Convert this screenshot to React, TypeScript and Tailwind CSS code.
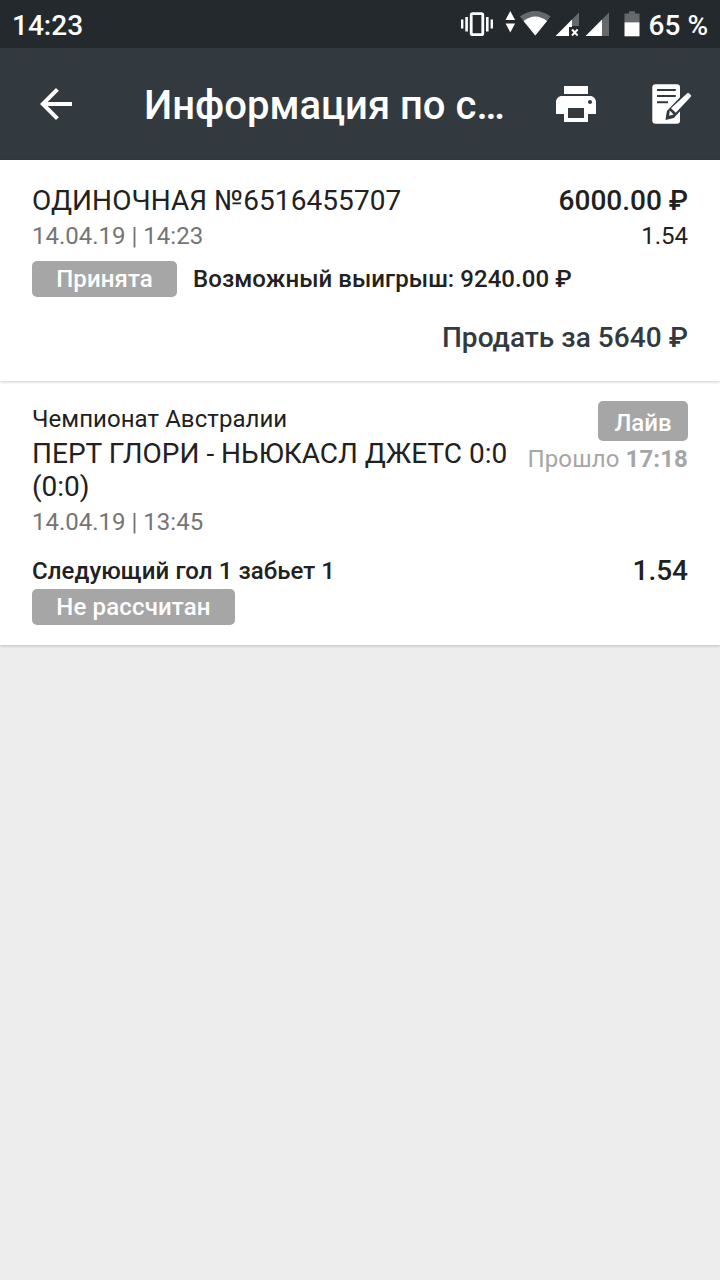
import type { ReactNode } from 'react';

function StatusIcons() {
  return (
    <svg className="h-12 w-[180px]" viewBox="460 0 180 48" fill="#fff">
      <rect x="471.2" y="13.7" width="11.6" height="21" rx="1.5" fill="none" stroke="#fff" strokeWidth="2.8" />
      <path d="M461 19.5h2.4v9H461zM465.3 17h2.6v14.5h-2.6zM486 17h2.6v14.5H486zM490.6 19.5h2.4v9h-2.4z" />
      <path d="M510.3 11l4.8 9h-9.6zM510.3 32.4l4.8-9h-9.6z" />
      <path d="M520 16.5Q535.3 5.5 550.6 16.5L535.3 35.5z" opacity=".3" />
      <path d="M523.5 21Q535.3 12 547.1 21L535.3 35.5z" />
      <path d="M579 12.6V26h-7v-6.4z" opacity=".3" />
      <path d="M555.6 36L572 19.6V27h-3v9z" />
      <path d="M572 29.5l5.6 6M577.6 29.5l-5.6 6" stroke="#fff" strokeWidth="1.9" />
      <path d="M609 12.6V36h-7V19.6z" opacity=".3" />
      <path d="M585.6 36L602 19.6V36z" />
      <path d="M629 11.2h6v2.3h4.5V22.5h-15v-9h4.5z" opacity=".3" />
      <path d="M624.5 22.3h15v14h-15z" />
    </svg>
  );
}

function BackIcon() {
  return (
    <svg className="h-12 w-12 shrink-0" viewBox="0 0 24 24" fill="#fff">
      <path d="M20 11H7.83l5.59-5.59L12 4l-8 8 8 8 1.41-1.41L7.83 13H20v-2z" />
    </svg>
  );
}

function PrintIcon() {
  return (
    <svg className="h-12 w-12 shrink-0" viewBox="0 0 24 24" fill="#fff">
      <path d="M19 8H5c-1.66 0-3 1.34-3 3v6h4v4h12v-4h4v-6c0-1.66-1.34-3-3-3zm-3 11H8v-5h8v5zm3-7c-.55 0-1-.45-1-1s.45-1 1-1 1 .45 1 1-.45 1-1 1zm-1-9H6v4h12V3z" />
    </svg>
  );
}

function NoteIcon() {
  return (
    <svg className="h-12 w-12 shrink-0" viewBox="648 80 48 48">
      <rect x="652.3" y="84.3" width="27.7" height="39.4" rx="3.2" fill="#fff" />
      <path d="M657 90h18.8M657 96h18.8M657 102.2h11" stroke="#323a40" strokeWidth="2" />
      <path d="M685.8 91.2l7 6.3-19 20.4-8.3 2 1.4-9z" fill="#323a40" />
      <path d="M687.2 93.2Q688 92.4 688.9 93.2L690.8 95Q691.6 96 690.8 96.8L675.8 112.8L671 108.2z" fill="#fff" />
      <path d="M669.7 110.5l3.9 4-4.4 1.2z" fill="#fff" />
    </svg>
  );
}

function Badge({ children, className }: { children: ReactNode; className: string }) {
  return (
    <span className={`flex items-center justify-center rounded-[5px] bg-[#a6a6a6] font-medium text-white ${className}`}>
      {children}
    </span>
  );
}

export default function App() {
  return (
    <div className="flex h-[1280px] w-[720px] flex-col overflow-hidden whitespace-nowrap bg-[#ededed] font-['Roboto','Noto_Sans',sans-serif] text-2xl text-[#212121]">
      <div className="flex h-12 items-center justify-between bg-[#23292c] px-3 text-[28px] font-medium text-white">
        <span className="pt-1">14:23</span>
        <div className="flex items-center gap-[9px]">
          <StatusIcons />
          <span className="pt-1">65 %</span>
        </div>
      </div>

      <header className="flex h-28 items-center bg-[#323a40] pr-6 pl-8 text-white">
        <BackIcon />
        <h1 className="ml-16 w-[408px] pt-1 text-[40px] font-medium">Информация по с…</h1>
        <PrintIcon />
        <div className="ml-12 flex">
          <NoteIcon />
        </div>
      </header>

      <section className="z-10 flex h-[221px] flex-col bg-white px-8 pt-[25px] shadow-[0_1px_3px_rgba(0,0,0,0.2)]">
        <div className="flex justify-between text-[28px] leading-8">
          <span className="tracking-[0.08px]">ОДИНОЧНАЯ №6516455707</span>
          <span className="font-medium">6000.00 ₽</span>
        </div>
        <div className="-mt-px flex justify-between leading-10">
          <span className="text-[#757575]">14.04.19 | 14:23</span>
          <span>1.54</span>
        </div>
        <div className="mt-[5px] flex gap-4 leading-9">
          <Badge className="h-9 w-[145px] tracking-[0.1px]">Принята</Badge>
          <span className="font-medium tracking-[0.06px]">Возможный выигрыш: 9240.00 ₽</span>
        </div>
        <button className="mt-[25px] self-end text-[28px] leading-8 font-medium tracking-[0.05px] text-[#323a40]">
          Продать за 5640 ₽
        </button>
      </section>

      <section className="h-[264px] bg-white px-8 pt-5 shadow-[0_1px_3px_rgba(0,0,0,0.2)]">
        <div className="flex justify-between">
          <div>
            <div className="leading-9 tracking-[0.06px]">Чемпионат Австралии</div>
            <div className="w-[480px] text-[28px] leading-[33px] whitespace-normal">
              ПЕРТ ГЛОРИ - НЬЮКАСЛ ДЖЕТС 0:0 (0:0)
            </div>
            <div className="leading-[38px] text-[#757575]">14.04.19 | 13:45</div>
          </div>
          <div className="flex flex-col items-end">
            <Badge className="h-10 w-[90px] pt-[3px]">Лайв</Badge>
            <div className="leading-9 tracking-[0.12px] text-[#a6a6a6]">
              Прошло <b className="font-bold">17:18</b>
            </div>
          </div>
        </div>
        <div className="mt-3 flex justify-between leading-9 font-medium">
          <span className="tracking-[0.08px]">Следующий гол 1 забьет 1</span>
          <span className="text-[28px]">1.54</span>
        </div>
        <Badge className="h-9 w-[203px] tracking-[0.15px]">Не рассчитан</Badge>
      </section>
    </div>
  );
}
